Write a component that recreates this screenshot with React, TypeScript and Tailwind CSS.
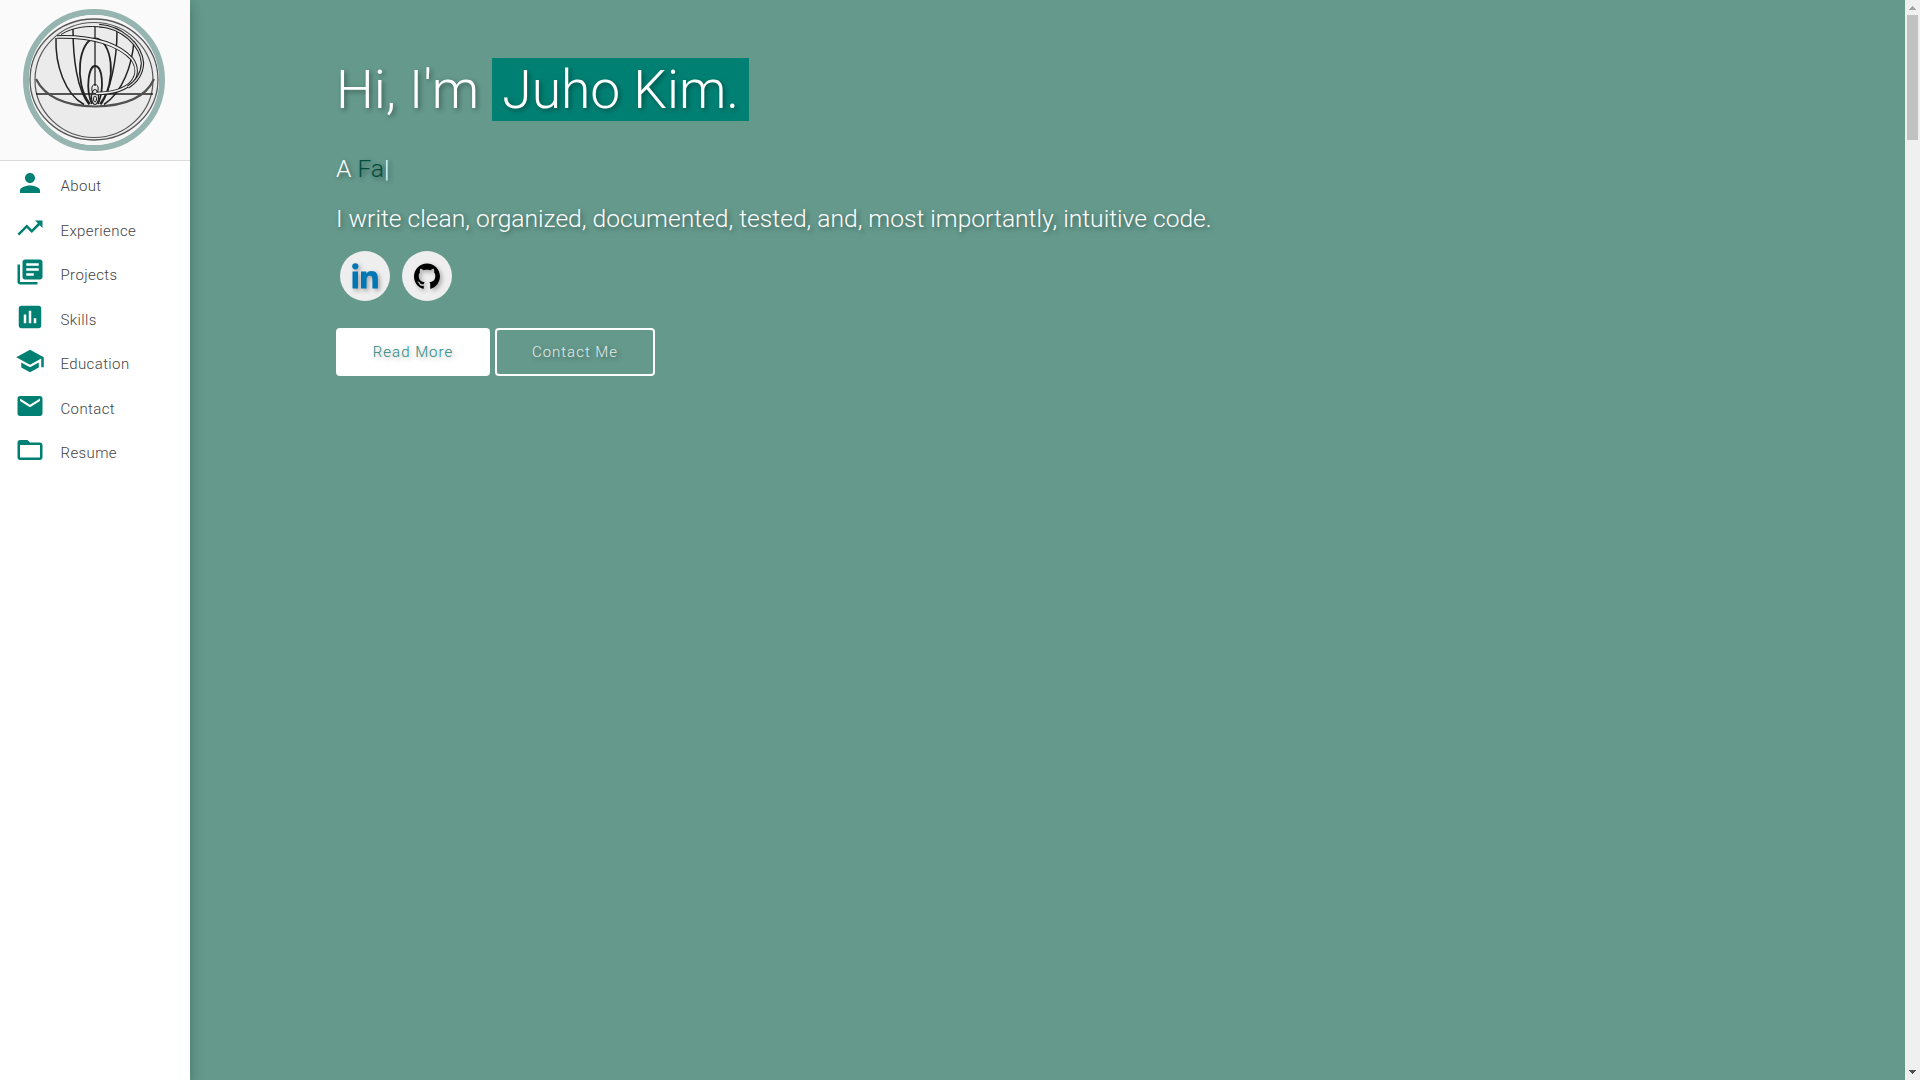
import React from "react";

const nav: [string, string][] = [
  ["About", "M12 12c2.21 0 4-1.79 4-4s-1.79-4-4-4-4 1.79-4 4 1.79 4 4 4zm0 2c-2.67 0-8 1.34-8 4v2h16v-2c0-2.66-5.33-4-8-4z"],
  ["Experience", "M16 6l2.29 2.29-4.88 4.88-4-4L2 16.59 3.41 18l6-6 4 4 6.3-6.29L22 12V6z"],
  ["Projects", "M4 6H2v14c0 1.1.9 2 2 2h14v-2H4V6zm16-4H8c-1.1 0-2 .9-2 2v12c0 1.1.9 2 2 2h12c1.1 0 2-.9 2-2V4c0-1.1-.9-2-2-2zm-1 9H9V9h10v2zm-4 4H9v-2h6v2zm4-8H9V5h10v2z"],
  ["Skills", "M19 3H5c-1.1 0-2 .9-2 2v14c0 1.1.9 2 2 2h14c1.1 0 2-.9 2-2V5c0-1.1-.9-2-2-2zM9 17H7v-7h2v7zm4 0h-2V7h2v10zm4 0h-2v-4h2v4z"],
  ["Education", "M5 13.18v4L12 21l7-3.82v-4L12 17l-7-3.82zM12 3L1 9l11 6 9-4.91V17h2V9L12 3z"],
  ["Contact", "M20 4H4c-1.1 0-1.99.9-1.99 2L2 18c0 1.1.9 2 2 2h16c1.1 0 2-.9 2-2V6c0-1.1-.9-2-2-2zm0 4l-8 5-8-5V6l8 5 8-5v2z"],
  ["Resume", "M20 6h-8l-2-2H4c-1.1 0-1.99.9-1.99 2L2 18c0 1.1.9 2 2 2h16c1.1 0 2-.9 2-2V8c0-1.1-.9-2-2-2zm0 12H4V8h16v10z"],
];

function Emblem() {
  return (
    <svg width="130" height="130" viewBox="29 15 130 130" fill="none" stroke="#222" className="block rounded-full">
      <rect x="29" y="15" width="130" height="130" fill="#f6f6f6" stroke="none" />
      <ellipse cx="94" cy="79.5" rx="64" ry="60.5" fill="#ebebeb" strokeWidth="1.3" stroke="#555" />
      <ellipse cx="94" cy="80" rx="59" ry="57.5" strokeWidth="1.2" stroke="#555" />
      <path d="M36 94H153" strokeWidth="1.4" />
      <path d="M36 79C45 97 65 106 95 106.500C125 106 146 97 154 79" strokeWidth="2.2" stroke="#505050" />
      <path d="M56 38C55 65 65 94 84 104.500M73 29C73 58 77 90 89 104.500M117 31C117 60 110 92 101 104.500M134 41C132 65 123 92 104 104.500" strokeWidth="1.500" />
      <path d="M90 104C73 83 79 39 95 38.500C112 39 118 82 100 104" strokeWidth="1.800" />
      <path d="M92 104C85 88 89 66 95 66C102 66 105 87 98 104" strokeWidth="1.800" />
      <path d="M95 27V86" strokeWidth="1.300" />
      <ellipse cx="95" cy="89" rx="3.200" ry="4.500" strokeWidth="1" />
      <ellipse cx="95" cy="97" rx="3.500" ry="7.500" strokeWidth="1.2" />
      <ellipse cx="95" cy="99" rx="1.500" ry="3" strokeWidth="1" />
      <path d="M61 34.500C73 27 89 25 104 27.500" strokeWidth="1" />
      <path d="M57 37C94 36 119 45 132 59C142 73 135 93 96 93.500" strokeWidth="3.6" />
      <path d="M57 37C94 36 119 45 132 59C142 73 135 93 96 93.500" strokeWidth="1.6" stroke="#eee" />
      <path d="M99 25.500C122 27 141 45 142.500 63C142 75 136 82 128 87" strokeWidth="3.400" />
      <path d="M99 25.500C122 27 141 45 142.500 63C142 75 136 82 128 87" strokeWidth="1.300" stroke="#ddd" />
    </svg>
  );
}

export default function App() {
  return (
    <div className="flex h-[1080px] w-[1920px] overflow-hidden bg-[#64998c] font-['Roboto',sans-serif] font-light">
      <aside className="z-10 h-full w-[190px] shrink-0 bg-white shadow-[0_8px_17px_0_rgba(0,0,0,0.1),0_2px_10px_0_rgba(0,0,0,0.16)]">
        <div className="h-[161px] border-b border-[#dbdbdb] bg-[#fafafa] pt-[9px] pl-[23px]">
          <div className="size-[142px] rounded-full border-[6px] border-[#96b5b0]">
            <Emblem />
          </div>
        </div>
        <nav className="flex flex-col pt-px">
          {nav.map(([label, d]) => (
            <a key={label} className="flex h-[44.5px] items-center pl-[15px] text-[15px] tracking-[0.38px] text-[#444]">
              <svg viewBox="0 0 24 24" className="mr-[15.5px] mb-[2px] size-[30px]" fill="#008073">
                <path d={d} />
              </svg>
              <span className="pt-[4px]">{label}</span>
            </a>
          ))}
        </nav>
      </aside>
      <main className="min-w-0 flex-1 pt-[58px] pl-[146px] text-white [text-shadow:2px_2px_5px_rgba(0,0,0,0.4)]">
        <h1 className="text-[53.4px] leading-[63px] whitespace-pre">
          Hi, I'm <span className="inline-block h-[63px] bg-[#008073] px-[10px]">Juho Kim.</span>
        </h1>
        <p className="mt-[33px] text-[24.6px] leading-[30px]">
          A <span className="text-[#004d40]">Fa</span>|
        </p>
        <p className="mt-[20px] text-[24.6px] leading-[30px]">I write clean, organized, documented, tested, and, most importantly, intuitive code.</p>
        <div className="mt-[17px] flex gap-3 pl-1">
          <span className="flex size-[50px] items-center justify-center rounded-full bg-[#eee]">
            <svg width="26" height="26" viewBox="0 0 26 26" fill="#0077b5" className="overflow-visible drop-shadow-[2px_2px_2px_rgba(0,0,0,0.3)]">
              <circle cx="3.300" cy="3.300" r="3.100" />
              <path d="M.5 8.500H6V25.500H.5zM9 8.500h5.300v2.300c.9-1.500 2.500-2.700 5.100-2.700 5.200 0 6.500 3.300 6.500 7.900v9.500h-5.500v-8.500c0-2.200-.3-4.300-2.700-4.300-2.500 0-3.100 2-3.100 4.200v8.600H9z" />
            </svg>
          </span>
          <span className="flex size-[50px] items-center justify-center rounded-full bg-[#eee]">
            <svg width="26" height="26" viewBox="0 0 16 16" fill="#000" className="translate-y-[0.5px] overflow-visible drop-shadow-[2px_2px_2px_rgba(0,0,0,0.3)]">
              <path d="M8 0C3.580 0 0 3.580 0 8c0 3.540 2.290 6.530 5.470 7.590.4.070.55-.17.55-.38 0-.19-.01-.82-.01-1.490-2.010.37-2.530-.49-2.690-.94-.09-.23-.48-.94-.82-1.130-.28-.15-.68-.52-.01-.53.63-.01 1.080.58 1.230.82.720 1.210 1.870.87 2.330.66.070-.52.280-.87.510-1.070-1.780-.2-3.640-.89-3.640-3.950 0-.87.310-1.590.82-2.150-.08-.2-.36-1.020.08-2.120 0 0 .67-.21 2.200.82.640-.18 1.320-.27 2-.27s1.360.09 2 .27c1.530-1.040 2.200-.82 2.200-.82.440 1.100.16 1.920.08 2.120.51.560.82 1.270.82 2.150 0 3.070-1.870 3.750-3.650 3.950.29.250.54.730.54 1.480 0 1.070-.01 1.930-.01 2.200 0 .21.150.46.550.38A8.010 8.010 0 0 0 16 8c0-4.420-3.580-8-8-8z" />
            </svg>
          </span>
        </div>
        <div className="mt-[27px] flex gap-[5px] text-[15px] tracking-[1px]">
          <a className="flex h-12 w-[154px] items-center justify-center rounded-[4px] bg-white text-[#26897b] [text-shadow:2px_2px_5px_rgba(0,0,0,0.3)]">Read More</a>
          <a className="flex h-12 w-[160px] items-center justify-center rounded-[4px] border-2 border-white text-[#e2ecea]">Contact Me</a>
        </div>
      </main>
      <div className="flex w-[15px] flex-col items-center bg-[#f0f0f0]">
        <svg width="15" height="15" shapeRendering="crispEdges"><path d="M4 10L7.500 6L11 10z" fill="#a3a3a3" /></svg>
        <div className="h-[125px] w-[11px] bg-[#c1c1c1]" />
        <svg width="15" height="15" shapeRendering="crispEdges" className="mt-auto"><path d="M4 5L7.500 9L11 5z" fill="#505050" /></svg>
      </div>
    </div>
  );
}
